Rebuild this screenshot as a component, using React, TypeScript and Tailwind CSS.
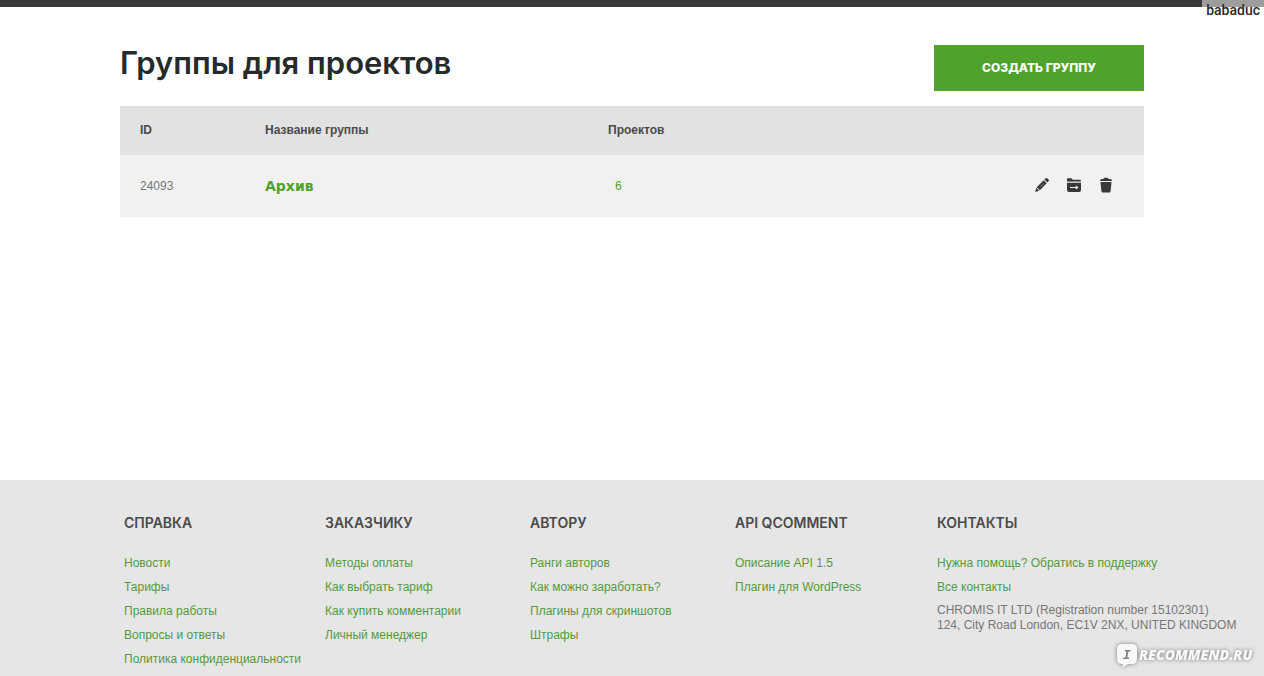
import React from 'react';

const footerColumns = [
  {
    title: 'Справка',
    links: ['Новости', 'Тарифы', 'Правила работы', 'Вопросы и ответы', 'Политика конфиденциальности'],
  },
  {
    title: 'Заказчику',
    links: ['Методы оплаты', 'Как выбрать тариф', 'Как купить комментарии', 'Личный менеджер'],
  },
  {
    title: 'Автору',
    links: ['Ранги авторов', 'Как можно заработать?', 'Плагины для скриншотов', 'Штрафы'],
  },
  {
    title: 'API Qcomment',
    links: ['Описание API 1.5', 'Плагин для WordPress'],
  },
  {
    title: 'Контакты',
    links: ['Нужна помощь? Обратись в поддержку', 'Все контакты'],
    address: ['CHROMIS IT LTD (Registration number 15102301)', '124, City Road London, EC1V 2NX, UNITED KINGDOM'],
  },
];

const groups = [{ id: 24093, name: 'Архив', projects: 6 }];

const PencilIcon = () => (
  <svg viewBox="0 0 16 16" className="size-4" fill="currentColor" aria-hidden="true">
    <path d="M10.400 2.600 11.800 1.200q.7-.6 1.400 0l1.500 1.500q.6.700 0 1.400l-1.400 1.400z" />
    <path d="M9.700 3.300 12.600 6.200 5.900 13.200 2.700 10.200z" />
    <path d="M2.200 10.800 5.200 13.700 1.200 15z" />
    <path d="M6.400 9.900 9.800 6.500" stroke="#9a9a9a" strokeWidth=".8" />
  </svg>
);

const FolderIcon = () => (
  <svg viewBox="0 0 16 16" className="size-4" fill="currentColor" aria-hidden="true">
    <path d="M1 2.200q0-1 1-1h3q.5 0 .8.400l1 1.200h6.700q1.500 0 1.500 1.300v.5H1z" />
    <path d="M1 5.700h14V13q0 2-2 2H3q-2 0-2-2z" />
    <path d="M4 10.500h7.500M9.800 8.900l1.900 1.600-1.900 1.600" fill="none" stroke="#f1f1f1" strokeWidth="1.100" />
  </svg>
);

const TrashIcon = () => (
  <svg viewBox="0 0 16 16" className="size-4" fill="currentColor" aria-hidden="true">
    <path d="M2 3.900q0-1.900 1.900-1.900h1.600q.2-1.300 1.300-1.300h2.400q1.100 0 1.300 1.300h1.600q1.900 0 1.900 1.900z" />
    <path d="M2.500 5h11l-.9 9.200q-.1 1.300-1.400 1.300H4.800q-1.300 0-1.400-1.300z" />
  </svg>
);

const Watermark = () => (
  <svg
    viewBox="0 0 150 36"
    className="absolute right-0 bottom-0 h-9 w-[150px] drop-shadow-[0_0_2px_#777777]"
    role="img"
    aria-label="IRECOMMEND.RU"
  >
    <path
      d="M8 4h10q5 0 5 5v10q0 5-5 5h-4l-6 4 1-4H8q-5 0-5-5V9q0-5 5-5z"
      fill="#f8f8f8"
    />
    <text x="9" y="19" fill="#808080" fontFamily="DejaVu Sans Mono, monospace" fontSize="13" fontWeight="700" fontStyle="italic">
      I
    </text>
    <text x="25" y="20" fill="#f8f8f8" fontFamily="Open Sans, sans-serif" fontSize="14" fontWeight="800" fontStyle="italic">
      RECOMMEND.RU
    </text>
  </svg>
);

export default function App() {
  return (
    <div className="relative flex min-h-screen flex-col overflow-x-hidden bg-white font-['Liberation_Sans',sans-serif] text-xs text-[#777777]">
      <div className="h-[7px] bg-[#3b3a3a]" />
      <div className="absolute top-0 right-0 bg-white/50 px-1 pt-px font-['Roboto',sans-serif] text-sm leading-[18px] font-medium text-[#2b2b2b]">
        babaduc
      </div>

      <main className="mx-auto w-full max-w-5xl pt-[38px]">
        <div className="mb-[15px] flex items-start justify-between">
          <h1 className="font-['Inter',sans-serif] text-[31px] leading-9 font-semibold text-[#262a2a]">
            Группы для проектов
          </h1>
          <button
            type="button"
            className="h-[46px] w-[210px] bg-[#4fa22b] font-['Inter',sans-serif] text-xs font-extrabold text-white uppercase"
          >
            Создать группу
          </button>
        </div>

        <table className="w-full table-fixed text-left">
          <thead className="bg-[#e2e2e2] text-[#4a4a4a]">
            <tr className="h-[49px]">
              <th className="w-[125px] px-5 pb-0.5 font-bold">ID</th>
              <th className="w-[343px] px-5 pb-0.5 font-bold">Название группы</th>
              <th className="px-5 pb-0.5 font-bold">Проектов</th>
              <th className="w-[160px]" />
            </tr>
          </thead>
          <tbody className="bg-[#f1f1f1]">
            {groups.map((group) => (
              <tr key={group.id} className="h-[62px]">
                <td className="px-5">{group.id}</td>
                <td className="px-5">
                  <a href="#" className="font-['DejaVu_Sans',sans-serif] text-sm font-bold text-[#4fa22b]">
                    {group.name}
                  </a>
                </td>
                <td className="px-5">
                  <a href="#" className="px-[7px] text-[#4fa22b]">
                    {group.projects}
                  </a>
                </td>
                <td className="pr-[30px] pb-0.5">
                  <div className="flex justify-end gap-4 text-[#383838]">
                    <button type="button" aria-label="Редактировать">
                      <PencilIcon />
                    </button>
                    <button type="button" aria-label="Переместить">
                      <FolderIcon />
                    </button>
                    <button type="button" aria-label="Удалить">
                      <TrashIcon />
                    </button>
                  </div>
                </td>
              </tr>
            ))}
          </tbody>
        </table>
      </main>

      <footer className="relative mt-auto bg-[#e6e6e6] pt-[34px] pb-[5px]">
        <div className="mx-auto grid max-w-5xl grid-cols-[201fr_205fr_205fr_202fr_203fr] px-1">
          {footerColumns.map((column) => (
            <div key={column.title} className="min-w-0 whitespace-nowrap">
              <h2 className="mb-[19px] font-['Inter',sans-serif] text-sm leading-[18px] font-semibold text-[#4a4a4a] uppercase">
                {column.title}
              </h2>
              <ul className="text-[#559a3c]">
                {column.links.map((link) => (
                  <li key={link} className="leading-6">
                    <a href="#">{link}</a>
                  </li>
                ))}
              </ul>
              {column.address && (
                <address className="pt-1 leading-[15px] not-italic">
                  {column.address.map((line) => (
                    <p key={line}>{line}</p>
                  ))}
                </address>
              )}
            </div>
          ))}
        </div>
        <Watermark />
      </footer>
    </div>
  );
}
